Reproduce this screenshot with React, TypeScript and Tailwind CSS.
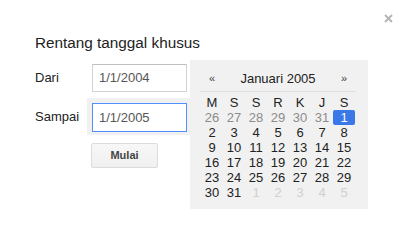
import React from 'react';

const dayNames = ['M', 'S', 'S', 'R', 'K', 'J', 'S'];

type Day = { n: number; kind: 'prev' | 'cur' | 'next' };

const buildWeeks = (): Day[][] => {
  const days: Day[] = [];
  for (let n = 26; n <= 31; n++) days.push({ n, kind: 'prev' });
  for (let n = 1; n <= 31; n++) days.push({ n, kind: 'cur' });
  for (let n = 1; n <= 5; n++) days.push({ n, kind: 'next' });
  const weeks: Day[][] = [];
  for (let i = 0; i < days.length; i += 7) weeks.push(days.slice(i, i + 7));
  return weeks;
};

const Calendar: React.FC = () => {
  const weeks = buildWeeks();
  return (
    <div className="w-[178px] h-[149px] bg-[#f1f1f1] pt-[11px] pl-[11px] pr-[13px] text-[13px] text-[#222]">
      <div className="grid grid-cols-7 h-[15px] leading-[15px]">
        <span className="text-center text-[11px] text-[#444]">«</span>
        <span className="col-span-5 text-center">Januari 2005</span>
        <span className="text-center text-[11px] text-[#444]">»</span>
      </div>
      <div className="mt-[5px] border-b border-[#dedede] -mx-[1px]" />
      <div className="mt-[3px] grid grid-cols-7 leading-[15px]">
        {dayNames.map((d, i) => (
          <span key={i} className="h-[15px] text-center">
            {d}
          </span>
        ))}
        {weeks.flat().map((d, i) => {
          const selected = d.kind === 'cur' && d.n === 1;
          return (
            <span
              key={i}
              className={`h-[15px] text-center rounded-[2px] ${
                selected
                  ? 'bg-[#3b78e7] text-white'
                  : d.kind === 'prev'
                  ? 'text-[#8c8c8c]'
                  : d.kind === 'next'
                  ? 'text-[#d0d0d0]'
                  : ''
              }`}
            >
              {d.n}
            </span>
          );
        })}
      </div>
    </div>
  );
};

export default function App() {
  return (
    <div
      className="relative w-[409px] h-[235px] bg-white text-[#222]"
      style={{ fontFamily: '"Liberation Sans", Arial, sans-serif' }}
    >
      <button className="absolute left-[383px] top-[13px] w-[10px] h-[10px] flex items-center justify-center">
        <svg width="9" height="9" viewBox="0 0 9 9">
          <path d="M1 1L8 8M8 1L1 8" stroke="#b4b4b4" strokeWidth="1.8" />
        </svg>
      </button>

      <div className="pl-[35px] pt-[33px]">
        <h2 className="text-[15.3px] leading-[20px] text-[#222]">Rentang tanggal khusus</h2>

        <div className="mt-[7px] flex">
          <div className="w-[155px] flex flex-col text-[13px]">
            <div className="mt-[4px] flex items-center h-[28px]">
              <span className="w-[57px]">Dari</span>
              <div className="w-[95px] h-[28px] border border-[#d3d3d3] border-t-[#c0c0c0] bg-white pl-[6px] flex items-center text-[#555]">
                1/1/2004
              </div>
            </div>
            <div className="mt-[6px] flex items-center">
              <span className="w-[52px]">Sampai</span>
              <div className="w-[103px] h-[37px] bg-[#f1f1f1] pl-[5px] pt-[5px]">
                <div className="w-[95px] h-[29px] border border-[#4d90fe] bg-white pl-[6px] flex items-center text-[#555]">
                  1/1/2005
                </div>
              </div>
            </div>
            <button className="mt-[8px] ml-[56px] w-[67px] h-[25px] rounded-[2px] border border-[#dcdcdc] bg-gradient-to-b from-[#f7f7f7] to-[#f0f0f0] text-[11px] font-bold text-[#444]">
              Mulai
            </button>
          </div>
          <Calendar />
        </div>
      </div>
    </div>
  );
}
